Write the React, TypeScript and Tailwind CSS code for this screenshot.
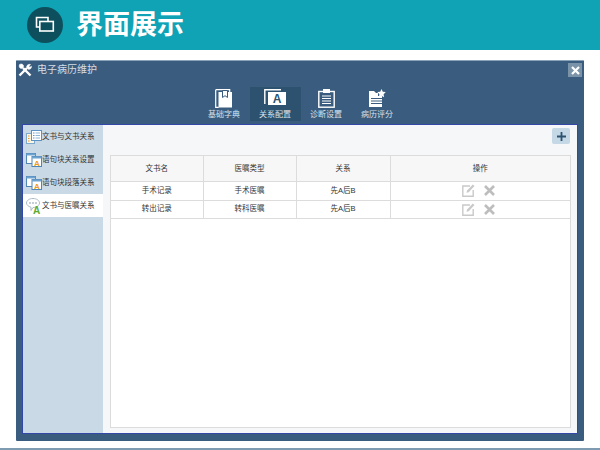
import type { ReactNode } from "react"

const font = { fontFamily: '"Liberation Sans", "Noto Sans CJK SC", sans-serif' }

const BookIcon = () => (
  <svg width="18" height="19" viewBox="0 0 18 19" fill="none">
    <path d="M.7.7h14v2.300" stroke="#fff" strokeWidth="1.200" />
    <path d="M.7.7v17.600h3" stroke="#fff" strokeWidth="1.200" />
    <rect x="3.500" y="3" width="13.500" height="15.500" fill="#fff" />
    <path d="M7.500 1.500h5v7l-2.500-1.800L7.500 8.500z" fill="#fff" stroke="#3a5c7e" strokeWidth="1" />
  </svg>
)

const FontIcon = () => (
  <svg width="22" height="16" viewBox="0 0 22 16" fill="none">
    <path d="M.8 15V.8H17" stroke="#fff" strokeWidth="1.400" />
    <rect x="4" y="3" width="18" height="13" fill="#fff" />
    <text x="13" y="14" textAnchor="middle" fontSize="12" fontWeight="700" fill="#2c5270" fontFamily="Liberation Sans">A</text>
  </svg>
)

const ClipboardIcon = () => (
  <svg width="17" height="19" viewBox="0 0 17 19" fill="none">
    <rect x=".8" y="2.500" width="15.400" height="15.700" stroke="#fff" strokeWidth="1.400" />
    <rect x="5" y="0" width="7" height="4" fill="#fff" />
    <path d="M4 7h9M4 9.500h9M4 12h9M4 14.500h9" stroke="#fff" strokeWidth="1" />
  </svg>
)

const ScoreIcon = () => (
  <svg width="17" height="18" viewBox="0 0 17 18" fill="#fff">
    <path d="M0 2h5l2 2h2v3h4v11H0z" />
    <path d="M2 9.500h11M2 12h11M2 14.500h11" stroke="#3a5c7e" strokeWidth="1" />
    <path d="M12.500 0l1.300 2.700 3 .4-2.200 2.100.5 3-2.600-1.400-2.600 1.400.5-3-2.200-2.100 3-.4z" />
  </svg>
)

const ListIcon = () => (
  <svg width="16" height="14" viewBox="0 0 16 14" fill="none">
    <rect x=".5" y="3.500" width="8" height="10" fill="#fdf6e3" stroke="#7fa9cc" />
    <path d="M2 6h1.500M2 8.500h1.500M2 11h1.500" stroke="#e8962e" />
    <rect x="5.500" y=".5" width="10" height="10" fill="#fff" stroke="#5c93c4" />
    <path d="M7 3h1.500M7 5.500h1.500M7 8h1.500" stroke="#5c93c4" />
    <path d="M9.500 3H14M9.500 5.500H14M9.500 8H14" stroke="#8fb4d4" />
  </svg>
)

const BlockIcon = () => (
  <svg width="16" height="14" viewBox="0 0 16 14" fill="none">
    <rect x=".5" y=".5" width="9" height="10" fill="#fff" stroke="#4f86b8" />
    <rect x=".5" y=".5" width="9" height="2" fill="#6fa3cf" />
    <rect x="6" y="3.500" width="9.500" height="10" fill="#fff" stroke="#4f86b8" />
    <rect x="6" y="3.500" width="9.500" height="2" fill="#6fa3cf" />
    <text x="10.800" y="13" textAnchor="middle" fontSize="8" fontWeight="700" fill="#ef9a22" fontFamily="Liberation Sans">A</text>
  </svg>
)

const BubbleIcon = () => (
  <svg width="16" height="16" viewBox="0 0 16 16" fill="none">
    <path d="M7 .5c3.600 0 6.500 2 6.500 4.500S10.600 9.500 7 9.500l-2 3V9.200C2.300 8.500.5 6.900.5 5 .5 2.500 3.400.5 7 .5z" fill="#fff" stroke="#a9bac8" />
    <circle cx="4" cy="5" r=".8" fill="#7d93a6" />
    <circle cx="7" cy="5" r=".8" fill="#7d93a6" />
    <circle cx="10" cy="5" r=".8" fill="#7d93a6" />
    <text x="10.500" y="15.500" textAnchor="middle" fontSize="10" fontWeight="700" fill="#5cab32" fontFamily="Liberation Sans">A</text>
  </svg>
)

const EditIcon = () => (
  <svg width="13" height="13" viewBox="0 0 13 13" fill="none">
    <path d="M8 2H.8v10.200h10.400V6" stroke="#c9c9c9" strokeWidth="1.400" />
    <path d="M4.500 8.800l.6-2.300L10.800.5 12.500 2 6.700 8.200z" fill="#c9c9c9" />
  </svg>
)

const CrossIcon = () => (
  <svg width="11" height="11" viewBox="0 0 11 11">
    <path d="M1 1l9 9M10 1l-9 9" stroke="#bdbdbd" strokeWidth="2.600" />
  </svg>
)

const toolbar: { label: string; icon: ReactNode; active?: boolean }[] = [
  { label: "基础字典", icon: <BookIcon /> },
  { label: "关系配置", icon: <FontIcon />, active: true },
  { label: "诊断设置", icon: <ClipboardIcon /> },
  { label: "病历评分", icon: <ScoreIcon /> },
]

const sidebar: { label: string; icon: ReactNode; active?: boolean }[] = [
  { label: "文书与文书关系", icon: <ListIcon /> },
  { label: "语句块关系设置", icon: <BlockIcon /> },
  { label: "语句块段落关系", icon: <BlockIcon /> },
  { label: "文书与医嘱关系", icon: <BubbleIcon />, active: true },
]

const rows = [
  { cells: ["手术记录", "手术医嘱", "先A后B"], height: "h-[19px]" },
  { cells: ["转出记录", "转科医嘱", "先A后B"], height: "h-[18px]" },
]

export default function App() {
  return (
    <div className="w-[600px] h-[450px] overflow-hidden bg-white flex flex-col" style={font}>
      <header className="h-[50px] shrink-0 bg-[#10a3b5] flex items-center pl-[27px] gap-[13px]">
        <div className="w-[36px] h-[36px] rounded-full bg-[#0d4f5c] flex items-center justify-center">
          <svg width="20" height="18" viewBox="0 0 20 18" fill="none" stroke="#fff" strokeWidth="1.600">
            <path d="M4 11H1.500V1.500H13V5" />
            <rect x="4.800" y="5.500" width="13.500" height="9.500" />
          </svg>
        </div>
        <h1 className="text-[27px] leading-none font-bold text-white">界面展示</h1>
      </header>

      <div className="mx-[16px] mt-[10px] h-[381px] bg-[#3a5c7e] border-t border-[#8ba3b8] flex flex-col rounded-[1px]">
        <div className="h-[18px] shrink-0 flex items-center justify-between pl-[2px] pr-[2px]">
          <div className="flex items-center gap-[5px]">
            <svg width="14" height="14" viewBox="0 0 14 14" fill="none" stroke="#fff">
              <path d="M12.500 12.500L5 5" strokeWidth="2.400" />
              <path d="M1.500 1.500c1.500-1 3.500-.5 4 1s-.5 3-2 3-3-1.500-2-4z" fill="#fff" strokeWidth="0.500" />
              <path d="M1.500 12.500L9 5" strokeWidth="2.400" />
              <path d="M8.500 4c.3-2 2.200-3.200 4-2.500L11 3.200l.8 1 1.700-1c.3 2-1.500 3.600-3.500 3z" fill="#fff" strokeWidth="0.500" />
            </svg>
            <span className="text-[10px] leading-none text-[#d5dee6]">电子病历维护</span>
          </div>
          <div className="w-[14px] h-[14px] bg-[#7a93a9] flex items-center justify-center">
            <svg width="9" height="9" viewBox="0 0 9 9">
              <path d="M1 1l7 7M8 1L1 8" stroke="#fff" strokeWidth="2.200" />
            </svg>
          </div>
        </div>

        <nav className="h-[42px] shrink-0 flex justify-center items-end pl-[1px]">
          {toolbar.map((t) => (
            <div
              key={t.label}
              className={`w-[51px] h-[34px] pt-[2px] flex flex-col items-center ${t.active ? "bg-[#2c5270]" : ""}`}
            >
              <div className="h-[20px] flex items-start justify-center">{t.icon}</div>
              <span className="text-[8px] leading-[11px] text-[#d9e2ea] whitespace-nowrap">{t.label}</span>
            </div>
          ))}
        </nav>

        <div className="mx-[6px] mt-[3px] h-[310px] flex bg-[#f5f7f8] border border-[#3347a8]">
          <aside className="w-[80px] shrink-0 bg-[#c9d9e5]">
            {sidebar.map((s) => (
              <div
                key={s.label}
                className={`h-[23px] flex items-center pl-[3px] ${s.active ? "bg-white" : ""}`}
              >
                <div className="w-[16px] shrink-0 flex items-center">{s.icon}</div>
                <span className="text-[7.500px] leading-none text-[#333] whitespace-nowrap">{s.label}</span>
              </div>
            ))}
          </aside>

          <main className="flex-1 min-w-0 flex flex-col pl-[7px] pr-[6px] pb-[5px]">
            <div className="h-[30px] shrink-0 flex justify-end items-start pt-[3px] pr-[1px]">
              <div className="w-[18px] h-[16px] rounded-[2px] bg-[#c5d8e6] flex items-center justify-center">
                <svg width="11" height="11" viewBox="0 0 11 11">
                  <path d="M5.500 1v9M1 5.500h9" stroke="#2c5270" strokeWidth="1.800" />
                </svg>
              </div>
            </div>
            <div className="flex-1 bg-white border border-[#dcdcdc]">
              <table className="w-full table-fixed border-collapse text-[7.500px] text-[#333]">
                <thead>
                  <tr className="h-[25px] bg-[#f7f7f7]">
                    <th className="w-[92px] font-normal border-b border-r border-[#dcdcdc]">文书名</th>
                    <th className="w-[93px] font-normal border-b border-r border-[#dcdcdc]">医嘱类型</th>
                    <th className="w-[94px] font-normal border-b border-r border-[#dcdcdc]">关系</th>
                    <th className="font-normal border-b border-[#dcdcdc]">操作</th>
                  </tr>
                </thead>
                <tbody>
                  {rows.map((r) => (
                    <tr key={r.cells[0]} className={r.height}>
                      {r.cells.map((c) => (
                        <td key={c} className="text-center border-b border-r border-[#dcdcdc]">{c}</td>
                      ))}
                      <td className="border-b border-[#dcdcdc]">
                        <div className="flex items-center justify-center gap-[9px] pr-[4px]">
                          <EditIcon />
                          <CrossIcon />
                        </div>
                      </td>
                    </tr>
                  ))}
                </tbody>
              </table>
            </div>
          </main>
        </div>
      </div>

      <div className="mt-auto h-[2px] shrink-0 bg-[#7f9bb2]" />
    </div>
  )
}
